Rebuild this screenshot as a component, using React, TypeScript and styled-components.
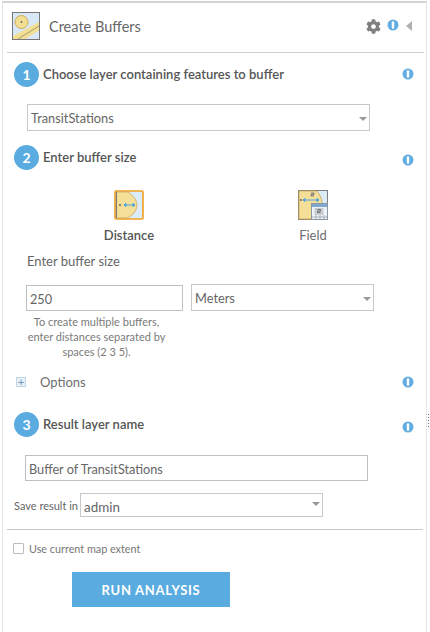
import React from "react";
import styled, { createGlobalStyle } from "styled-components";
import { FaCog } from "react-icons/fa";

const GlobalStyle = createGlobalStyle`
  html, body {
    margin: 0;
    padding: 0;
    background: #fff;
    overflow: hidden;
  }
  * {
    box-sizing: border-box;
  }
`;

const Page = styled.div`
  width: 430px;
  height: 632px;
  padding: 1px 3px 0 2px;
  position: relative;
  font-family: Lato, "Open Sans", sans-serif;
  color: #4c4c4c;
`;

const Panel = styled.div`
  height: 631px;
  border-top: 2px solid #d4d4d4;
  border-left: 1px solid #e6e6e6;
  border-right: 1px solid #e6e6e6;
`;

const Header = styled.div`
  height: 50px;
  margin: 0 2px 0 4px;
  padding: 0 12px 3px 5px;
  display: flex;
  align-items: center;
  border-bottom: 1px solid #cfcfcf;
`;

const Title = styled.div`
  margin-left: 9px;
  flex: 1;
  font-size: 14.5px;
  color: #666;
`;

const HeaderTools = styled.div`
  display: flex;
  align-items: center;
  gap: 6px;
  color: #808080;
  font-size: 15px;
`;

const CollapseArrow = styled.div`
  margin-left: 1px;
  width: 0;
  height: 0;
  border-top: 5px solid transparent;
  border-bottom: 5px solid transparent;
  border-right: 6px solid #b0b0b0;
`;

const StepRow = styled.div<{ $top: number }>`
  height: 24px;
  margin: ${(p) => p.$top}px 12px 0 11px;
  display: flex;
  align-items: center;
  gap: 4px;
`;

const StepNumber = styled.div`
  width: 25px;
  height: 25px;
  flex: none;
  border-radius: 50%;
  background: #5aabdf;
  color: #fff;
  font-size: 14px;
  font-weight: 700;
  display: flex;
  align-items: center;
  justify-content: center;
`;

const StepLabel = styled.div`
  flex: 1;
  font-size: 13px;
  font-weight: 600;
  color: #555;
`;

const InfoWrap = styled.div<{ $shift?: number }>`
  display: flex;
  transform: translateY(${(p) => p.$shift ?? 0}px);
`;

const SelectBox = styled.div<{
  $width: number;
  $height?: number;
  $left?: number;
  $arrowUp?: boolean;
}>`
  width: ${(p) => p.$width}px;
  height: ${(p) => p.$height ?? 27}px;
  margin-left: ${(p) => p.$left ?? 0}px;
  flex: none;
  padding: 0 2px 0 3px;
  border: 1px solid #c8c8c8;
  background: #fff;
  display: flex;
  align-items: ${(p) => (p.$arrowUp ? "flex-start" : "center")};
  justify-content: space-between;
  font-size: 12.8px;
  color: #666;
`;

const SelectArrow = styled.span<{ $up?: boolean }>`
  width: 0;
  height: 0;
  margin-top: ${(p) => (p.$up ? 8 : 3)}px;
  border-left: 4px solid transparent;
  border-right: 4px solid transparent;
  border-top: 4px solid #999;
`;

const SavedFolder = styled.span`
  margin-top: 5px;
  font-size: 13.4px;
`;

const LayerRow = styled.div`
  margin: 18px 0 0 24px;
`;

const ToolChoices = styled.div`
  margin: 21px 0 0 0;
  padding-left: 96px;
  display: grid;
  grid-template-columns: 60px 124px 60px;
`;

const Choice = styled.div<{ $col: number; $selected?: boolean }>`
  grid-column: ${(p) => p.$col};
  display: flex;
  flex-direction: column;
  align-items: center;
  gap: 7px;
  font-size: 13px;
  font-weight: ${(p) => (p.$selected ? 600 : 400)};
  color: ${(p) => (p.$selected ? "#555" : "#6e6e6e")};
`;

const ToolIcon = styled.svg`
  display: block;
  width: 30px;
  height: 30px;
`;

const FieldLabel = styled.div`
  margin: 10px 0 0 24px;
  font-size: 13px;
  line-height: 16px;
  color: #666;
`;

const SizeRow = styled.div`
  margin: 15px 0 0 23px;
  display: flex;
  align-items: flex-end;
`;

const TextField = styled.input<{ $width: number }>`
  width: ${(p) => p.$width}px;
  height: 26px;
  flex: none;
  padding: 2px 3px 0;
  border: 1px solid #c0c0c0;
  border-radius: 0;
  outline: none;
  font-family: inherit;
  font-size: 12.7px;
  color: #666;
`;

const Hint = styled.div`
  width: 157px;
  margin: 3px 0 0 15px;
  text-align: center;
  font-size: 11px;
  line-height: 15px;
  color: #7a7a7a;
`;

const OptionsRow = styled.div`
  margin: 15px 12px 0 13px;
  height: 16px;
  display: flex;
  align-items: center;
  font-size: 13px;
  color: #6e6e6e;
`;

const Expander = styled.div`
  width: 10px;
  height: 10px;
  flex: none;
  border: 1px solid #c3d6e8;
  background: #e9f1f8;
  color: #5f86ad;
  font-size: 9px;
  line-height: 8px;
  text-align: center;
  font-family: "DejaVu Sans", sans-serif;
`;

const OptionsLabel = styled.div`
  flex: 1;
  margin-left: 14px;
`;

const ResultName = styled.div`
  margin: 19px 0 0 22px;
`;

const SaveRow = styled.div`
  margin: 12px 0 0 11px;
  display: flex;
  align-items: center;
`;

const SaveLabel = styled.div`
  width: 66px;
  font-size: 11px;
  color: #666;
`;

const Rule = styled.div`
  margin: 12px 3px 0 4px;
  border-top: 1px solid #c8c8c8;
`;

const ExtentRow = styled.label`
  margin: 12px 0 0 10px;
  display: flex;
  align-items: center;
  gap: 5px;
  font-size: 10.8px;
  color: #777;
`;

const CheckBox = styled.span`
  width: 11px;
  height: 11px;
  border: 1px solid #bcbcbc;
  border-radius: 1px;
  background: #fff;
`;

const RunButton = styled.button`
  display: block;
  width: 158px;
  height: 35px;
  margin: 17px 0 0 69px;
  border: none;
  background: #5aabdf;
  color: #fff;
  font-family: inherit;
  font-size: 13px;
  font-weight: 700;
  letter-spacing: 0.7px;
`;

const Handle = styled.div`
  position: absolute;
  left: 428px;
  top: 414px;
  width: 1px;
  height: 15px;
  background: repeating-linear-gradient(#666 0 1px, transparent 1px 3px);
`;

const InfoIcon = () => (
  <svg width="12" height="12" viewBox="0 0 12 12">
    <circle cx="6" cy="6" r="5.5" fill="#62aee2" />
    <rect x="4.8" y="2.2" width="2.4" height="7.6" rx="1.1" fill="#fff" />
  </svg>
);

const BuffersIcon = () => (
  <svg width="28" height="28" viewBox="0 0 28 28">
    <rect x="0.5" y="0.5" width="27" height="27" fill="#d8e8f7" stroke="#777" />
    <circle cx="9.5" cy="10" r="6.5" fill="#f3df93" stroke="#cfae55" />
    <circle cx="9.5" cy="10" r="0.9" fill="#666" />
    <path d="M1 24 L27 10 L27 18.5 L13 27 L1 27 Z" fill="#f3df93" />
    <path d="M6 27 L27 14" stroke="#a89d72" fill="none" />
  </svg>
);

const DistanceIcon = () => (
  <ToolIcon viewBox="0 0 30 30">
    <rect x="1" y="1" width="28" height="28" rx="1" fill="#dcebf8" stroke="#f2a01e" strokeWidth="1.6" />
    <path d="M2 2 H14 C20 6 23 11 23 15 C23 20 20 24 14 28 H2 Z" fill="#f3df98" stroke="#cda75a" strokeWidth="0.8" />
    <rect x="2" y="2" width="1" height="26" fill="#777" />
    <circle cx="6" cy="15" r="0.9" fill="#555" />
    <path d="M10 15 H21 M10 15 l2 -1.6 v3.2 Z M21 15 l-2 -1.6 v3.2 Z" stroke="#4ea3e0" strokeWidth="1" fill="#4ea3e0" />
  </ToolIcon>
);

const FieldIcon = () => (
  <ToolIcon viewBox="0 0 30 30">
    <rect x="0.5" y="0.5" width="29" height="29" fill="#dcebf8" stroke="#808080" />
    <path d="M1 1 H19 C22 5 24 9 24 13 L13 29 H1 Z" fill="#f3df98" stroke="#cda75a" strokeWidth="0.8" />
    <circle cx="3" cy="10" r="0.9" fill="#555" />
    <path d="M5 10 H21 M5 10 l2 -1.6 v3.2 Z M21 10 l-2 -1.6 v3.2 Z" stroke="#4ea3e0" strokeWidth="1" fill="#4ea3e0" />
    <path d="M13 3 h3 v1.5 h-3 v1.5 h3" stroke="#777" fill="none" />
    <rect x="13.5" y="13.5" width="16" height="16" fill="#eef3f8" stroke="#8b97a3" />
    <rect x="14" y="14" width="15" height="3" fill="#7fa8cc" />
    <rect x="16.5" y="18" width="9" height="7" fill="#c8ccd0" />
    <path d="M19.5 19.5 h3 v1.5 h-3 v1.5 h3" stroke="#555" fill="none" strokeWidth="0.8" />
    <path d="M14 27 H29 M18 25 V29 M22 25 V29 M26 25 V29" stroke="#a8b0b8" />
  </ToolIcon>
);

export default function App() {
  return (
    <Page>
      <GlobalStyle />
      <Panel>
        <Header>
          <BuffersIcon />
          <Title>Create Buffers</Title>
          <HeaderTools>
            <FaCog />
            <InfoWrap $shift={-1}>
              <InfoIcon />
            </InfoWrap>
            <CollapseArrow />
          </HeaderTools>
        </Header>

        <StepRow $top={9}>
          <StepNumber>1</StepNumber>
          <StepLabel>Choose layer containing features to buffer</StepLabel>
          <InfoWrap>
            <InfoIcon />
          </InfoWrap>
        </StepRow>
        <LayerRow>
          <SelectBox $width={343}>
            TransitStations
            <SelectArrow />
          </SelectBox>
        </LayerRow>

        <StepRow $top={14}>
          <StepNumber>2</StepNumber>
          <StepLabel>Enter buffer size</StepLabel>
          <InfoWrap $shift={3}>
            <InfoIcon />
          </InfoWrap>
        </StepRow>
        <ToolChoices>
          <Choice $col={1} $selected>
            <DistanceIcon />
            Distance
          </Choice>
          <Choice $col={3}>
            <FieldIcon />
            Field
          </Choice>
        </ToolChoices>
        <FieldLabel>Enter buffer size</FieldLabel>
        <SizeRow>
          <TextField $width={157} value="250" readOnly />
          <SelectBox $width={183} $left={8}>
            Meters
            <SelectArrow />
          </SelectBox>
        </SizeRow>
        <Hint>
          To create multiple buffers,
          <br />
          enter distances separated by
          <br />
          spaces (2 3 5).
        </Hint>
        <OptionsRow>
          <Expander>+</Expander>
          <OptionsLabel>Options</OptionsLabel>
          <InfoIcon />
        </OptionsRow>

        <StepRow $top={22}>
          <StepNumber>3</StepNumber>
          <StepLabel>Result layer name</StepLabel>
          <InfoWrap $shift={3}>
            <InfoIcon />
          </InfoWrap>
        </StepRow>
        <ResultName>
          <TextField $width={343} value="Buffer of TransitStations" readOnly />
        </ResultName>
        <SaveRow>
          <SaveLabel>Save result in</SaveLabel>
          <SelectBox $width={243} $height={24} $arrowUp>
            <SavedFolder>admin</SavedFolder>
            <SelectArrow $up />
          </SelectBox>
        </SaveRow>
        <Rule />
        <ExtentRow>
          <CheckBox />
          Use current map extent
        </ExtentRow>
        <RunButton>RUN ANALYSIS</RunButton>
      </Panel>
      <Handle />
    </Page>
  );
}
